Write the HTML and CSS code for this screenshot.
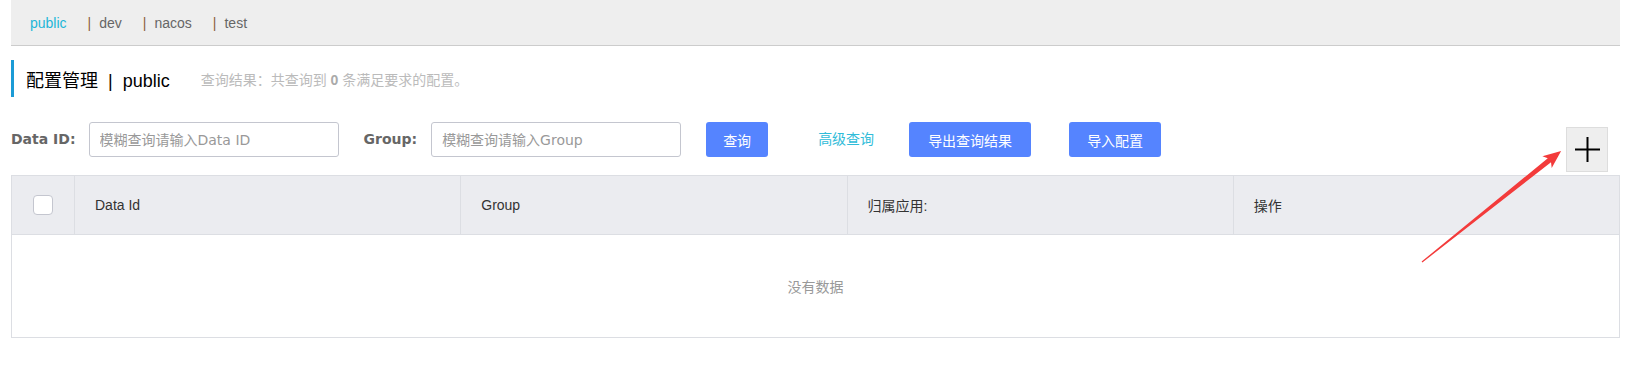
FILE: index.html
```html
<!DOCTYPE html>
<html>
	<head>
		<meta charset="utf-8">
		<title>配置管理</title>
		<link rel="stylesheet" href="styles.css">
	</head>
	<body>
	<div id="page">
		<div id="nsBar">
			<span class="ns active">public</span>
			<span class="ns"><i class="sep">|</i>dev</span>
			<span class="ns"><i class="sep">|</i>nacos</span>
			<span class="ns"><i class="sep">|</i>test</span>
		</div>
		<div id="titleBox">
			<span class="titleMain">配置管理<i class="titleSep">|</i>public</span>
			<span class="titleDesc">查询结果：共查询到 <b>0</b> 条满足要求的配置。</span>
		</div>
		<div id="toolbar">
			<label class="lbl lblId">Data ID:</label>
			<input type="text" class="search" placeholder="模糊查询请输入Data ID" />
			<label class="lbl lblGroup">Group:</label>
			<input type="text" class="search" placeholder="模糊查询请输入Group" />
			<button class="btn btnQuery">查询</button>
			<span class="advLink">高级查询</span>
			<button class="btn btnExport">导出查询结果</button>
			<button class="btn btnImport">导入配置</button>
			<span class="addBtn">
				<svg width="25" height="25" viewBox="0 0 25 25"><path d="M0 12.5H25M12.5 0V25" stroke="#000" stroke-width="2" fill="none"/></svg>
			</span>
		</div>
		<table id="cfgTable">
			<colgroup><col class="colCheck" /><col /><col /><col /><col /></colgroup>
			<thead>
				<tr>
					<th class="thCheck"><span class="checkbox"></span></th>
					<th>Data Id</th>
					<th>Group</th>
					<th>归属应用:</th>
					<th>操作</th>
				</tr>
			</thead>
			<tbody>
				<tr><td colspan="5" class="empty">没有数据</td></tr>
			</tbody>
		</table>
	</div>
	<svg id="arrow" width="1628" height="386" viewBox="0 0 1628 386">
		<polygon transform="translate(1422 262) rotate(-38.6)" points="0,-0.6 163,-2.6 160,-7.5 178,0 160,7.5 163,2.6 0,0.6" fill="#f33b3b"/>
	</svg>
	</body>
</html>
```

FILE: styles.css
```css
body{margin:0; font-family:"Liberation Sans", "Noto Sans CJK SC", sans-serif; font-size:14px; color:#333; background:#fff;}
#page{padding:0 8px 0 11px;}

#nsBar{height:45px; background:#eee; border-bottom:1px solid #ccc; display:flex; align-items:center; padding-left:19px;}
.ns{color:#666; margin-right:21px; white-space:nowrap;}
.ns.active{color:#22b6d8;}
.ns .sep{font-style:normal; color:#8b5e3c; margin-right:8px;}

#titleBox{margin-top:14px; height:37px; border-left:3px solid #1b9bd6; padding-left:12px; display:flex; align-items:center;}
.titleMain{font-size:18px; color:#000;}
.titleSep{font-style:normal; margin:0 10px;}
.titleDesc{margin-left:31px; color:#bbb; font-size:14px;}
.titleDesc b{color:#aaa;}

#toolbar{margin-top:25px; display:flex; align-items:flex-start; height:50px;}
.lbl{font-family:"DejaVu Sans", "Noto Sans CJK SC", sans-serif; font-weight:bold; font-size:14px; color:#666; line-height:35px;}
.lblId{margin-right:13px;}
.lblGroup{margin-left:25px; margin-right:14px;}
.search
{
	box-sizing:border-box;
	width:250px;
	height:35px;
	border:1px solid #c4c6cf;
	border-radius:3px;
	padding:0 10px;
	font-family:"DejaVu Sans", "Noto Sans CJK SC", sans-serif;
	font-size:14px;
	outline:none;
}
.search::placeholder{color:#999;}
.btn
{
	height:35px;
	border:none;
	border-radius:3px;
	background:#5584ff;
	color:#fff;
	font-family:"Liberation Sans", "Noto Sans CJK SC", sans-serif;
	font-size:14px;
	padding:0 17px;
	cursor:pointer;
}
.btnQuery{margin-left:25px;}
.advLink{margin-left:50px; color:#30bcd9; line-height:35px;}
.btnExport{margin-left:35px; padding:0 19px;}
.btnImport{margin-left:38px; padding:0 18px;}
.addBtn
{
	margin-left:auto;
	margin-top:5px;
	margin-right:12px;
	box-sizing:border-box;
	width:42px;
	height:45px;
	background:#eee;
	border:1px solid #ddd;
	display:flex;
	align-items:center;
	justify-content:center;
}

#cfgTable{margin-top:3px; width:100%; table-layout:fixed; border-collapse:collapse; border:1px solid #dcdee3;}
.colCheck{width:63px;}
#cfgTable th{height:58px; background:#ebecf0; border:1px solid #dcdee3; text-align:left; font-weight:normal; color:#333; padding:0 20px;}
#cfgTable th.thCheck{text-align:center; padding:0;}
.checkbox{display:inline-block; vertical-align:middle; box-sizing:border-box; width:20px; height:20px; border:1px solid #c4c6cf; border-radius:4px; background:#fff;}
#cfgTable td.empty{height:100px; text-align:center; color:#999; font-size:14px;}

#arrow{position:absolute; left:0; top:0; pointer-events:none;}
```
